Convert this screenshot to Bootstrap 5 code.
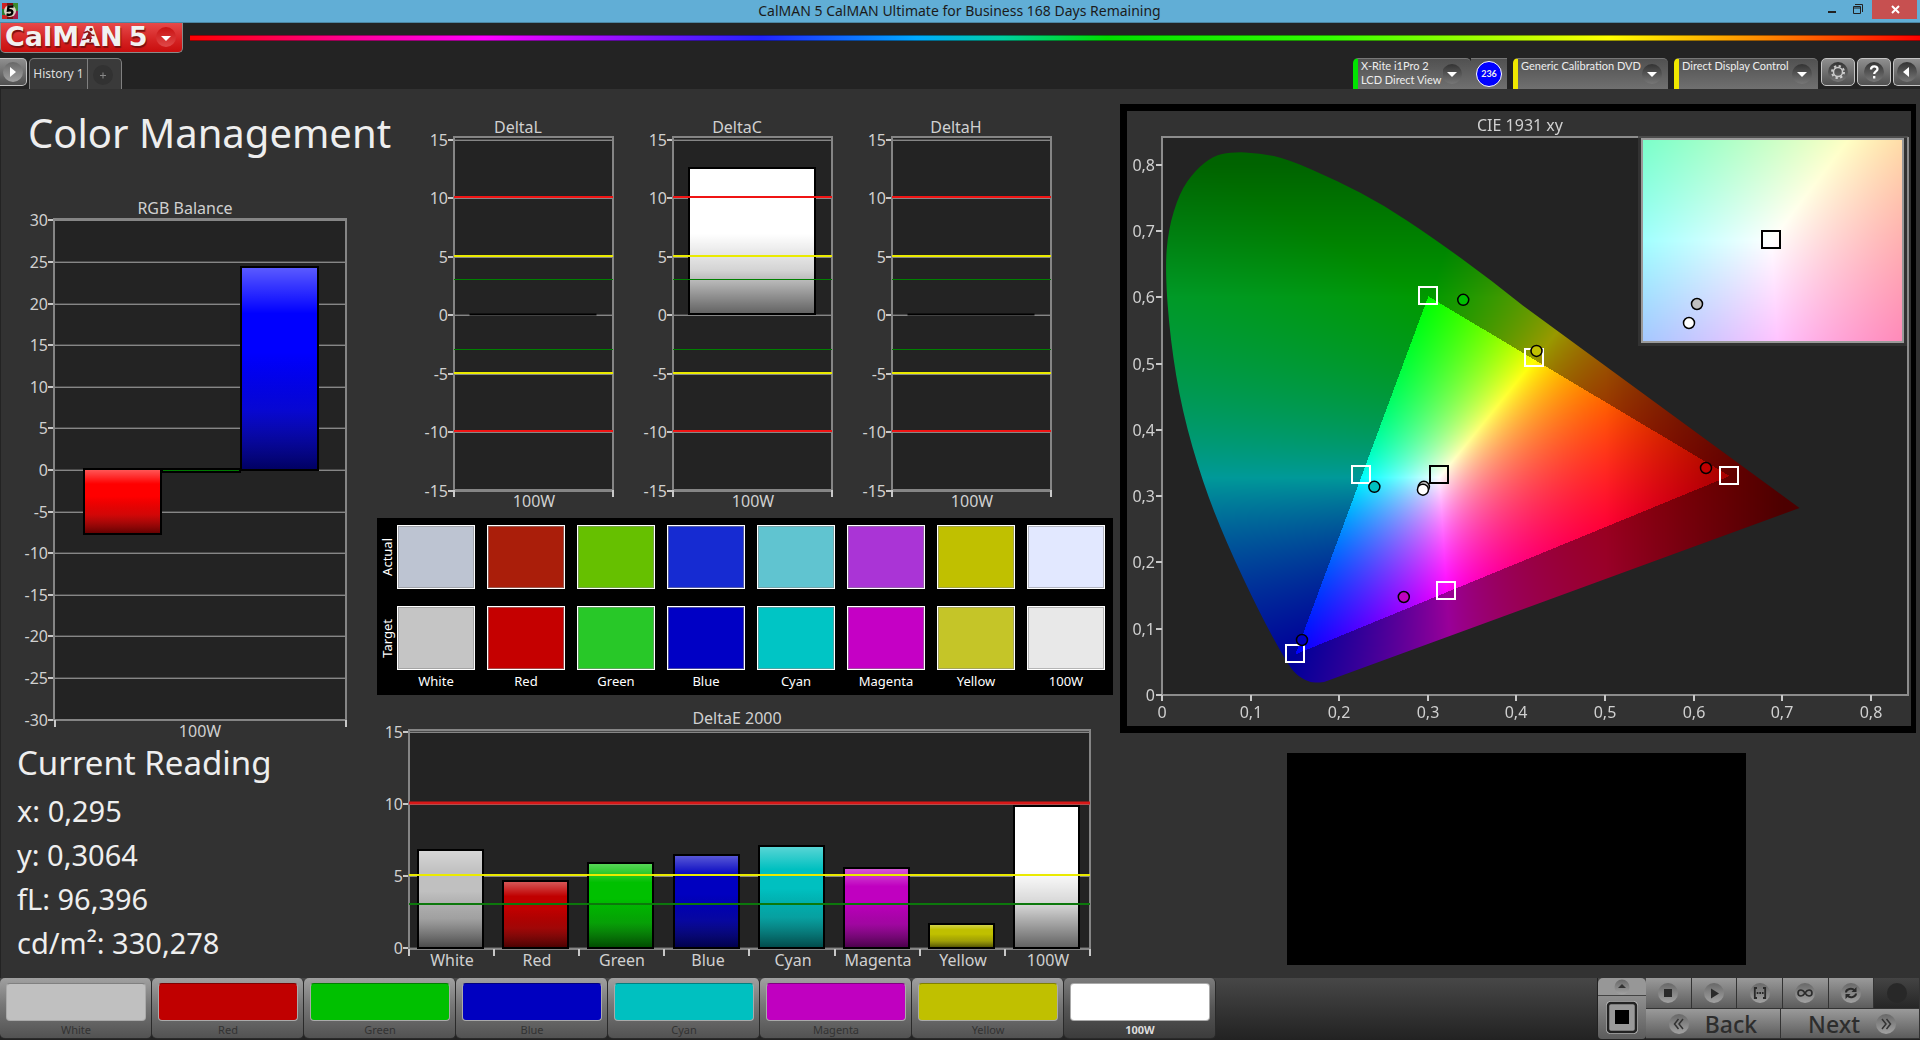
<!DOCTYPE html>
<html lang="en">
<head>
<meta charset="utf-8">
<meta name="viewport" content="width=device-width, initial-scale=1">
<title>CalMAN 5</title>
<link href="https://cdn.jsdelivr.net/npm/bootstrap@5.3.0/dist/css/bootstrap.min.css" rel="stylesheet">
<style>
body{background:#232323;color:#eee;font-family:"Noto Sans","Open Sans",sans-serif;font-size:12px;line-height:14px}
button{font-family:inherit;color:inherit;border:0;padding:0;background:none}
svg{display:block}
.titlebar{background:#61aed6;height:23px;border-bottom:1px solid #4c86a3;color:#1b1b1b;font-size:14px;padding:0 3px 0 2px}
.titlebar .side{flex:1 1 0}
.winbtn{width:24px;height:19px}
.winclose{width:45px;background:#c75050}
.logo{width:183px;height:30px;background:linear-gradient(#e64a4a,#d42222 60%,#c90d0d);border:1px solid #8a8a8a;border-top:0;border-radius:0 0 5px 5px;padding:0 5px 0 4px}
.logo .brand{font:bold 27px/27px "DejaVu Sans",sans-serif;color:#f1f1f1;text-shadow:1px 2px 1px #7c1010;white-space:nowrap}
.logo .five{margin-left:6px}
.logo .runner{left:79px;top:4px}
.rainbow{height:6px;margin-top:12px;margin-left:7px;background:linear-gradient(to right,#f00,#ff00a0 10%,#f0f 17%,#2222ff 33%,#0af 42%,#00d0a0 47%,#0d0 53%,#3f0 66%,#ff0 82%,#f80 91%,#f00);border-top:1px solid #0006;border-bottom:1px solid #0006}
.toolrow{height:36px;padding-top:5px}
.iconbtn{height:28px;width:34px;border:1px solid #c4c4c4;border-radius:5px;background:linear-gradient(#8f8f8f,#505050)}
.iconbtn.edge-l{width:27px;border-left:0;border-radius:0 5px 5px 0}
.iconbtn.edge-r{width:27px;border-right:0;border-radius:5px 0 0 5px}
.iconset{gap:2px;padding-left:3px}
.tabs{height:31px;border:1px solid #808080;border-bottom:0;border-radius:5px 5px 0 0;background:#3a3a3a;margin-left:2px}
.tabs .tab-name{width:58px;border-right:1px solid #808080;color:#ddd}
.tabs .tab-add{width:33px}
.device{height:31px;background:linear-gradient(#515151,#707070);border-top:1px solid #777;border-radius:5px 5px 0 0;border-left:5px solid #f0e800;text-align:left;padding-left:3px;font-family:Lato,sans-serif;font-size:11px}
.device.ready{border-left-color:#00e400}
.device-gap{margin-right:6px}
.reading{width:36px;border-left:1px solid #333}
.reading span{width:26px;height:26px;border:1px solid #fff;border-radius:50%;background:#00f;font-size:9px;font-weight:700}
.work{background:#323232;box-shadow:inset 1px 0 #232323;display:grid;grid-template-columns:377fr 736fr 807fr}
.work section{min-width:0}
.work h1{font-size:40px;line-height:52px;margin:18px 0 35px 28px;font-weight:400;white-space:nowrap}
.work h2{font-size:33px;line-height:48px;margin:0 0 2px;font-weight:400}
.figures{padding-left:17px}
.figures p{font-size:29px;line-height:44px;margin:0}
.deltas{padding:25px 55px 0 24px}
.deltas>svg{flex:1 1 0;min-width:0}
.patches{background:#000;padding:7px 8px 0 0;height:177px;color:#fff;font-size:13px}
.patches .lab{width:20px;margin-right:-12px}
.patches .lab span{writing-mode:vertical-rl;transform:rotate(180deg)}
.patches .prow{height:64px;gap:12px;margin-bottom:17px}
.patches .prow.last{margin-bottom:4px}
.patches .names{gap:12px}
.patch{flex:1 1 0;border:1px solid #fff;box-shadow:inset 0 0 0 1px #8888}
.pname{flex:1 1 0;text-align:center}
.cie{background:#323232;border:7px solid #000;border-right-width:5px;margin:15px 4px 20px 7px}
.cie canvas{position:absolute;left:0;top:0;width:100%;height:100%}
.cie svg{position:relative}
.preview{background:#000;width:459px;max-width:90%;height:212px}
.chart-title,.tick{fill:#d0d0d0;font-size:16px}
.dock{height:62px;background:linear-gradient(#474747,#222)}
.swbtn{width:152px;height:61px;border:1px solid #2a2a2a;border-width:0 1px 1px 0;border-radius:5px;background:linear-gradient(#a0a0a0,#777 45%,#525252);padding:4px 5px 0 6px;color:#333;font-size:11px}
.swbtn .chip{height:38px;border:1px solid #aaa;border-top-color:#0005;border-radius:4px;margin-bottom:2px}
.swbtn.on{background:linear-gradient(#7c7c7c,#555 50%,#3c3c3c);color:#ddd;font-weight:700}
.ctl{background:linear-gradient(#9a9a9a,#5c5c5c);border-right:1px solid #333;border-bottom:1px solid #333}
.ctl.flat{background:linear-gradient(#444,#262626)}
.stopcol{width:49px;border-left:1px solid #222}
.stopcol .upbtn{height:18px;background:#979797;border-bottom:1px solid #444;border-radius:5px 5px 0 0}
.stopcol .target{height:43px;background:linear-gradient(#8f8f8f,#5c5c5c);border-radius:0 0 4px 4px}
.transport{width:274px}
.transport .keys{height:31px}
.transport .nav2{height:30px}
.transport .ctl{flex:1 1 0}
.nav2 .ctl{font-size:23px;line-height:26px;color:#2d2d2d;font-weight:500}
</style>
</head>
<body class="d-flex flex-column min-vh-100">
<svg width="0" height="0" class="position-absolute" aria-hidden="true"><defs>
<linearGradient id="knob" x1="0" y1="0" x2="0" y2="1"><stop offset="0" stop-color="#333"/><stop offset="1" stop-color="#777"/></linearGradient>
<linearGradient id="knobL" x1="0" y1="0" x2="0" y2="1"><stop offset="0" stop-color="#686868"/><stop offset="1" stop-color="#a2a2a2"/></linearGradient>
<linearGradient id="knobR" x1="0" y1="0" x2="0" y2="1"><stop offset="0" stop-color="#c81212"/><stop offset="1" stop-color="#e04848"/></linearGradient>
<linearGradient id="gloss" x1="0" y1="0" x2="0" y2="1"><stop offset="0" stop-color="#fff" stop-opacity=".36"/><stop offset=".23" stop-color="#fff" stop-opacity="0"/><stop offset=".42" stop-color="#000" stop-opacity="0"/><stop offset=".7" stop-color="#222" stop-opacity=".2"/><stop offset="1" stop-color="#000" stop-opacity=".62"/></linearGradient>
<linearGradient id="glossW" x1="0" y1="0" x2="0" y2="1"><stop offset=".45" stop-opacity="0"/><stop offset=".7" stop-opacity=".17"/><stop offset="1" stop-opacity=".62"/></linearGradient>
</defs></svg>

<header>
  <div class="titlebar d-flex align-items-start">
    <div class="side"><svg width="16" height="20" viewBox="0 -3 16 20"><rect width="16" height="16" fill="#7a1010"/><path d="M0 0h5v16H0z" fill="#c22"/><path d="M0 6h4v6H0z" fill="#2a7a30"/><path d="M11 0h5v8h-5z" fill="#3a8a30"/><path d="M11 8h5v8h-5z" fill="#a01848"/><circle cx="8" cy="8" r="6" fill="#d8d0c0"/><path d="M11.500 3.500H6.500L6 7.500c4-1 5 1 4 3s-3.500 1.500-5.500 1" fill="none" stroke="#000" stroke-width="2.400"/></svg></div>
    <div class="align-self-center">CalMAN 5 CalMAN Ultimate for Business 168 Days Remaining</div>
    <div class="side d-flex justify-content-end">
      <button class="winbtn" aria-label="Minimize"><svg width="24" height="19"><path d="M4 12h8" stroke="#222" stroke-width="2"/></svg></button>
      <button class="winbtn" aria-label="Restore"><svg width="24" height="19"><path d="M5.500 6.500h7v7h-7zM5.500 8h7M7 4.500h7.500V12" fill="none" stroke="#222"/></svg></button>
      <button class="winclose winbtn" aria-label="Close"><svg width="45" height="19"><path d="M20 6l7 7M27 6l-7 7" stroke="#fff" stroke-width="2"/></svg></button>
    </div>
  </div>
  <div class="d-flex">
    <button class="logo d-flex align-items-start justify-content-between position-relative" aria-label="CalMAN 5 menu">
      <span class="brand">CalMAN<span class="five">5</span></span>
      <svg class="runner position-absolute" width="18" height="16" viewBox="0 0 18 16"><circle cx="11" cy="2.500" r="1.700" fill="#8c1414"/><path d="M3.500 6l4-1.500 2.500 1.500 1.500 2 3 .5M9.500 6l-2.500 4 3.500 1.500-.5 3.500M7.500 10l-1.500 2-4 .5" fill="none" stroke="#8c1414" stroke-width="1.600"/></svg>
      <svg width="22" height="28"><circle cx="11" cy="14" r="10" fill="url(#knobR)"/><path d="M6 13h10l-5 5z" fill="#fff"/></svg>
    </button>
    <div class="rainbow flex-grow-1"></div>
  </div>
  <div class="toolrow d-flex">
    <button class="iconbtn edge-l" aria-label="Open panel"><svg width="26" height="26"><circle cx="13" cy="13" r="10" fill="url(#knobL)"/><path d="M10 8v10l6-5z" fill="#fff"/></svg></button>
    <nav class="tabs d-flex">
      <button class="tab-name">History 1</button>
      <button class="tab-add" aria-label="Add tab"><svg width="32" height="30"><circle cx="15" cy="16" r="10" fill="#323232"/><path d="M12 16.500h6M15 13.500v6" stroke="#888"/></svg></button>
    </nav>
    <div class="ms-auto d-flex">
      <div class="d-flex device-gap">
        <button class="device ready d-flex" style="width:118px"><span class="flex-grow-1 text-nowrap">X-Rite i1Pro 2<br>LCD Direct View</span><svg class="flex-shrink-0" width="28" height="30"><circle cx="9" cy="15" r="10" fill="url(#knob)"/><path d="M4 13h10l-5 5z" fill="#fff"/></svg></button>
        <button class="device reading border-start-0 d-flex align-items-center justify-content-center p-0 rounded-0"><span class="d-flex align-items-center justify-content-center">236</span></button>
      </div>
      <button class="device d-flex device-gap" style="width:155px"><span class="flex-grow-1 text-nowrap">Generic Calibration DVD</span><svg class="flex-shrink-0" width="26" height="30"><circle cx="10" cy="15" r="10" fill="url(#knob)"/><path d="M5 13h10l-5 5z" fill="#fff"/></svg></button>
      <button class="device d-flex" style="width:144px"><span class="flex-grow-1 text-nowrap">Direct Display Control</span><svg class="flex-shrink-0" width="26" height="30"><circle cx="10" cy="15" r="10" fill="url(#knob)"/><path d="M5 13h10l-5 5z" fill="#fff"/></svg></button>
      <div class="d-flex iconset">
        <button class="iconbtn" aria-label="Settings"><svg width="32" height="26" viewBox="0 0 32 26"><circle cx="16" cy="13" r="10" fill="url(#knob)"/><circle cx="16" cy="13" r="4.500" fill="none" stroke="#ccc" stroke-width="1.500"/><circle cx="16" cy="13" r="6" fill="none" stroke="#ccc" stroke-width="2" stroke-dasharray="2.300 2.400"/></svg></button>
        <button class="iconbtn" aria-label="Help"><svg width="32" height="26" viewBox="0 0 32 26"><circle cx="16" cy="13" r="10" fill="url(#knob)"/><path d="M13 10.500c0-4 6.500-4 6.500-.5 0 2.500-3.300 2.200-3.300 5M16.200 17v2.500" fill="none" stroke="#fff" stroke-width="2.300"/></svg></button>
        <button class="iconbtn edge-r" aria-label="Collapse"><svg width="26" height="26"><circle cx="13" cy="13" r="10" fill="url(#knob)"/><path d="M15 8v10l-6-5z" fill="#fff"/></svg></button>
      </div>
    </div>
  </div>
</header>

<main class="work flex-grow-1">
  <section>
    <h1>Color Management</h1>
    <svg id="rgb" viewBox="0 0 377 545" role="img" aria-label="RGB Balance"></svg>
    <div class="figures">
      <h2>Current Reading</h2>
      <p>x: 0,295</p><p>y: 0,3064</p><p>fL: 96,396</p><p>cd/m²: 330,278</p>
    </div>
  </section>
  <section>
    <div class="deltas d-flex">
      <svg id="dl" viewBox="0 0 219 404" role="img" aria-label="DeltaL"></svg><svg id="dc" viewBox="0 0 219 404" role="img" aria-label="DeltaC"></svg><svg id="dh" viewBox="0 0 219 404" role="img" aria-label="DeltaH"></svg>
    </div>
    <div class="patches">
      <div class="prow d-flex" id="actual"></div>
      <div class="prow last d-flex" id="target"></div>
      <div class="names d-flex" id="names"></div>
    </div>
    <svg id="de" viewBox="0 0 736 276" role="img" aria-label="DeltaE 2000"></svg>
  </section>
  <section>
    <div class="cie position-relative">
      <canvas id="gamut" width="784" height="615"></canvas>
      <svg id="ciesvg" viewBox="0 0 784 615" role="img" aria-label="CIE 1931 xy"></svg>
    </div>
    <div class="preview mx-auto"></div>
  </section>
</main>

<footer class="dock d-flex">
  <div class="d-flex" id="dockbtns"></div>
  <div class="ms-auto d-flex">
    <div class="stopcol">
      <button class="upbtn d-block w-100" aria-label="Expand"><svg class="mx-auto" width="20" height="17"><circle cx="10" cy="9" r="7.500" fill="url(#knobL)"/><path d="M6 10h8l-4-4z" fill="#333"/></svg></button>
      <button class="target d-block w-100" aria-label="Pattern window"><svg class="mx-auto" width="34" height="36"><rect x="1.500" y="1.500" width="31" height="32" rx="4" fill="#999" stroke="#bbb"/><rect x="3" y="3" width="28" height="29" rx="3" fill="none" stroke="#222" stroke-width="2.500"/><path d="M10 10h14v14H10z" fill="#000"/></svg></button>
    </div>
    <div class="transport">
      <div class="keys d-flex">
        <button class="ctl" aria-label="Stop"><svg class="mx-auto" width="24" height="24"><circle cx="12" cy="12" r="10" fill="url(#knobL)"/><path d="M8 8h8v8H8z" fill="#2a2a2a"/></svg></button>
        <button class="ctl" aria-label="Play"><svg class="mx-auto" width="24" height="24"><circle cx="12" cy="12" r="10" fill="url(#knobL)"/><path d="M9 7.500v10l8-5z" fill="#2a2a2a"/></svg></button>
        <button class="ctl" aria-label="Range"><svg class="mx-auto" width="24" height="24"><circle cx="12" cy="12" r="10" fill="url(#knobL)"/><path d="M9 7H6.800v10H9M15 7h2.200v10H15" fill="none" stroke="#2a2a2a" stroke-width="1.800"/><path d="M8.700 12h7" stroke="#2a2a2a" stroke-width="1.800" stroke-dasharray="1.700 .9"/></svg></button>
        <button class="ctl" aria-label="Loop"><svg class="mx-auto" width="24" height="24"><circle cx="12" cy="12" r="10" fill="url(#knobL)"/><path d="M12 12c-1.500-2.300-2.700-3-4-3a3 3 0 0 0 0 6c1.300 0 2.500-.7 4-3s2.700-3 4-3a3 3 0 0 1 0 6c-1.300 0-2.500-.7-4-3z" fill="none" stroke="#2a2a2a" stroke-width="1.600"/></svg></button>
        <button class="ctl" aria-label="Refresh"><svg class="mx-auto" width="24" height="24"><circle cx="12" cy="12" r="10" fill="url(#knobL)"/><path d="M7 11.500c0-3.500 6-5 8.500-2M17 12.500c0 3.500-6 5-8.500 2" fill="none" stroke="#2a2a2a" stroke-width="2"/><path d="M17.500 6v5h-5zM6.500 18v-5h5z" fill="#2a2a2a"/></svg></button>
        <button class="ctl flat" aria-label="Status"><svg class="mx-auto" width="24" height="24"><circle cx="12" cy="12" r="10" fill="#282828"/></svg></button>
      </div>
      <div class="nav2 d-flex">
        <button class="ctl d-flex align-items-center justify-content-center gap-3"><svg width="20" height="20"><circle cx="10" cy="10" r="10" fill="url(#knobL)"/><path d="M9.500 5L5.500 10l4 5M14 5l-4 5 4 5" fill="none" stroke="#333" stroke-width="1.500"/></svg>Back</button>
        <button class="ctl d-flex align-items-center justify-content-center gap-3 ps-1">Next<svg width="20" height="20"><circle cx="10" cy="10" r="10" fill="url(#knobL)"/><path d="M6 5l4 5-4 5M10.500 5l4 5-4 5" fill="none" stroke="#333" stroke-width="1.500"/></svg></button>
      </div>
    </div>
  </div>
</footer>

<script>
const byId = id => document.getElementById(id);
const NAMES = ['White','Red','Green','Blue','Cyan','Magenta','Yellow','100W'];
const BASE = ['#c0c0c0','#c00000','#00c000','#0000c0','#00c0c0','#c000c0','#c0c000','#ffffff'];
const ACTUAL = ['#bdc4d2','#aa1e0a','#66c000','#162bd2','#60c4d0','#aa34d6','#c0c000','#e2e8ff'];
const TARGET = ['#c5c5c5','#c50000','#28c828','#0000c5','#00c5c5','#c500c5','#c5c528','#e8e8e8'];

// Vertical bar chart. o: frame {l,t,r,b}, zero line and unit height, ticks, bars [x,w,top,h,colour] and limit lines.
function barChart(id, o) {
  const y = v => Math.round(o.zero - v * o.unit);
  let s = `<text class="chart-title" x="${o.titleX}" y="${o.titleY}" text-anchor="middle">${o.title}</text>`;
  s += `<rect x="${o.l}" y="${o.t}" width="${o.r - o.l}" height="${o.b - o.t}" fill="#232323"/>`;
  for (const v of o.ticks) {
    s += `<path d="M${o.l} ${y(v)}H${o.r}" stroke="#4b4b4b" stroke-width="2"/><path d="M${o.l} ${y(v) + .5}H${o.r}" stroke="#868686"/>`;
    s += `<path d="M${o.l - 6} ${y(v)}H${o.l}" stroke="#c8c8c8" stroke-width="2"/>`;
    s += `<text class="tick" x="${o.l - 6}" y="${y(v) + 6}" text-anchor="end">${v}</text>`;
  }
  s += `<rect x="${o.l}" y="${o.t}" width="${o.r - o.l}" height="${o.b - o.t}" fill="none" stroke="#858585" stroke-width="2"/>`;
  for (const [x, w, top, h, c] of o.bars) {
    s += `<rect x="${x}" y="${top}" width="${w}" height="${h}" fill="${c}"/><rect x="${x}" y="${top}" width="${w}" height="${h}" fill="url(#${c === '#ffffff' ? 'glossW' : 'gloss'})" stroke="#000" stroke-width="${h > 1 ? 2 : 1}"/>`;
  }
  for (const [v, c, w] of o.limits || []) s += `<path d="M${o.l} ${y(v) - (w === 1 ? .5 : 1)}H${o.r}" stroke="${c}" stroke-width="${w}"/>`;
  for (const x of o.xt) s += `<path d="M${x} ${o.b}v7" stroke="#c8c8c8" stroke-width="2"/>`;
  for (const [x, t] of o.xl) s += `<text class="tick" x="${x}" y="${o.b + 17}" text-anchor="middle">${t}</text>`;
  byId(id).innerHTML = s;
}
barChart('rgb', {title:'RGB Balance', titleX:185, titleY:20, l:54, t:25, r:346, b:526, zero:276, unit:8.32,
  ticks:[30,25,20,15,10,5,0,-5,-10,-15,-20,-25,-30], xt:[55,346], xl:[[200,'100W']],
  bars:[[84,77,275,65,'#ff0000'],[162,78,275,3,'#008000'],[241,77,73,203,'#0000ff']]});
const limits = [[10,'#f01414',2],[5,'#eaea00',2],[3,'#008000',1],[-3,'#008000',1],[-5,'#eaea00',2],[-10,'#f01414',2]];
for (const [id, title, bar] of [['dl','DeltaL',[69,126,200,1,'#000000']],['dc','DeltaC',[69,126,54,146,'#ffffff']],['dh','DeltaH',[69,126,200,1,'#000000']]])
  barChart(id, {title, titleX:117, titleY:19, l:53, t:23, r:212, b:376, zero:201, unit:11.7, ticks:[15,10,5,0,-5,-10,-15],
    limits, xt:[53,212], xl:[[133,'100W']], bars:[bar]});
const tops = [155,186,168,160,151,173,229,111];
barChart('de', {title:'DeltaE 2000', titleX:360, titleY:29, l:32, t:35, r:713, b:254, zero:253, unit:14.4, ticks:[15,10,5,0],
  limits:[[10,'#d81818',3],[5,'#eaea00',2],[3,'#0c780c',2]],
  xt:[32,117,202,287,372,458,543,628,713], xl:NAMES.map((n, i) => [Math.round(75 + i * 85.2), n]),
  bars:tops.map((t, i) => [Math.round(41 + i * 85.2), 65, t, 253 - t, BASE[i]])});

const cells = a => a.map(c => `<div class="patch" style="background:${c}"></div>`).join('');
const lab = t => `<div class="lab d-flex align-items-center justify-content-center"><span>${t}</span></div>`;
byId('actual').innerHTML = lab('Actual') + cells(ACTUAL);
byId('target').innerHTML = lab('Target') + cells(TARGET);
byId('names').innerHTML = lab('') + NAMES.map(n => `<div class="pname">${n}</div>`).join('');
byId('dockbtns').innerHTML = NAMES.map((n, i) => `<button class="swbtn${i === 7 ? ' on' : ''}"><div class="chip" style="background:${BASE[i]}"></div>${n}</button>`).join('');

// CIE 1931 chromaticity diagram
const X0 = 35, Y0 = 584, KX = 886, KY = 663;
const px = x => X0 + x * KX, py = y => Y0 - y * KY;
const LOCUS = [[.183,.0197],[.1743,.0185],[.1656,.0197],[.151,.0308],[.1394,.0523],[.1102,.1232],[.0723,.2309],[.0461,.3202],[.0227,.428],[.0093,.5357],[.0035,.6404],[.007,.702],[.0198,.7574],[.0373,.7913],[.0577,.8128],[.0781,.819],[.1102,.8177],[.1423,.8079],[.1977,.7759],[.2501,.7389],[.3026,.6927],[.3726,.625],[.4426,.5493],[.7195,.282]];
const clamp = v => Math.max(0, Math.min(1, v));
function chroma(x, y) {
  y = Math.max(y, .001);
  const X = x / y, Z = (1 - x - y) / y;
  const c = [3.2406*X - 1.5372 - .4986*Z, -.9689*X + 1.8758 + .0415*Z, .0557*X - .204 + 1.057*Z].map(v => Math.max(0, v));
  const m = Math.max(...c);
  return c.map(v => v / m * 255);
}
const R = [.64,.331], G = [.3,.602], B = [.15,.062];
const side = (p, a, b) => (b[0]-a[0])*(p[1]-a[1]) - (b[1]-a[1])*(p[0]-a[0]);
const inTri = p => side(p, R, G) >= 0 && side(p, G, B) >= 0 && side(p, B, R) >= 0;
function field(w, h, fn) {
  const c = document.createElement('canvas'); c.width = w; c.height = h;
  const k = c.getContext('2d'), im = k.createImageData(w, h);
  for (let j = 0; j < h; j++) for (let i = 0; i < w; i++) {
    const v = fn(i, j), o = (j * w + i) * 4;
    im.data[o] = v[0]; im.data[o+1] = v[1]; im.data[o+2] = v[2]; im.data[o+3] = 255;
  }
  k.putImageData(im, 0, 0); return c;
}
const g = byId('gamut').getContext('2d');
g.fillStyle = '#232323'; g.fillRect(35, 26, 746, 558);
g.save(); g.beginPath();
g.moveTo(px(LOCUS[0][0]), py(LOCUS[0][1]));
for (let i = 1; i < LOCUS.length - 2; i++) {
  const [ax, ay] = LOCUS[i], [bx, by] = LOCUS[i + 1];
  g.quadraticCurveTo(px(ax), py(ay), px((ax + bx) / 2), py((ay + by) / 2));
}
g.lineTo(px(.7195), py(.282)); g.closePath(); g.clip();
g.drawImage(field(784, 615, (i, j) => {
  const x = (i - X0) / KX, y = (Y0 - j) / KY;
  let f = inTri([x, y]) ? 1 : .6;
  f *= 1 - .5 * clamp((x - .5) / .2);
  f *= 1 - .35 * clamp((y - .6) / .2);
  return chroma(x, y).map(v => v * f);
}), 0, 0);
g.restore();
g.fillStyle = '#323232'; g.fillRect(511, 25, 272, 210);
g.drawImage(field(261, 203, (i, j) => chroma(.3127 + (i - 129) / 4633, .329 + (101 - j) / 3672)), 515, 28);

let s = `<text class="chart-title" x="393" y="20" text-anchor="middle">CIE 1931 xy</text><path d="M511 26H35V584H781V26" fill="none" stroke="#8c8c8c" stroke-width="2"/><path d="M511 26h270" stroke="#666" stroke-width="1"/><rect x="515" y="28" width="261" height="203" fill="none" stroke="#9a9a9a" stroke-width="2"/>`;
for (let i = 0; i <= 8; i++) {
  const t = i ? '0,' + i : '0', x = Math.round(px(i / 10)), y = Math.round(py(i / 10));
  s += `<path d="M29 ${y}h6M${x} 584v6" stroke="#c8c8c8" stroke-width="2"/><text class="tick" x="28" y="${y + 6}" text-anchor="end">${t}</text><text class="tick" x="${x}" y="607" text-anchor="middle">${t}</text>`;
}
const sq = (x, y, c) => `<rect x="${Math.round(x) - 9}" y="${Math.round(y) - 9}" width="18" height="17" fill="none" stroke="${c}" stroke-width="2"/>`;
const dot = (x, y, c) => `<circle cx="${x}" cy="${y}" r="5.500" fill="${c}" stroke="#000" stroke-width="1.500"/>`;
for (const [x, y] of [R, G, B, [.42,.509], [.2246,.3315], [.3209,.157]]) s += sq(px(x), py(y), '#fff');
s += sq(px(.3127), py(.3315), '#000');
for (const [x, y, c] of [[.34,.596,'#00c000'],[.4227,.519,'#c0c000'],[.614,.3424,'#c00000'],[.2397,.314,'#00c0c0'],[.2956,.314,'#c0c0c0'],[.2945,.3097,'#fff'],[.2729,.1478,'#c000c0'],[.158,.083,'#0000c0']]) s += dot(px(x), py(y), c);
s += sq(644, 129, '#000') + dot(570, 193, '#c0c0c0') + dot(562, 212, '#fff');
byId('ciesvg').innerHTML = s;
</script>
<script src="https://cdn.jsdelivr.net/npm/bootstrap@5.3.0/dist/js/bootstrap.bundle.min.js"></script>
</body>
</html>
